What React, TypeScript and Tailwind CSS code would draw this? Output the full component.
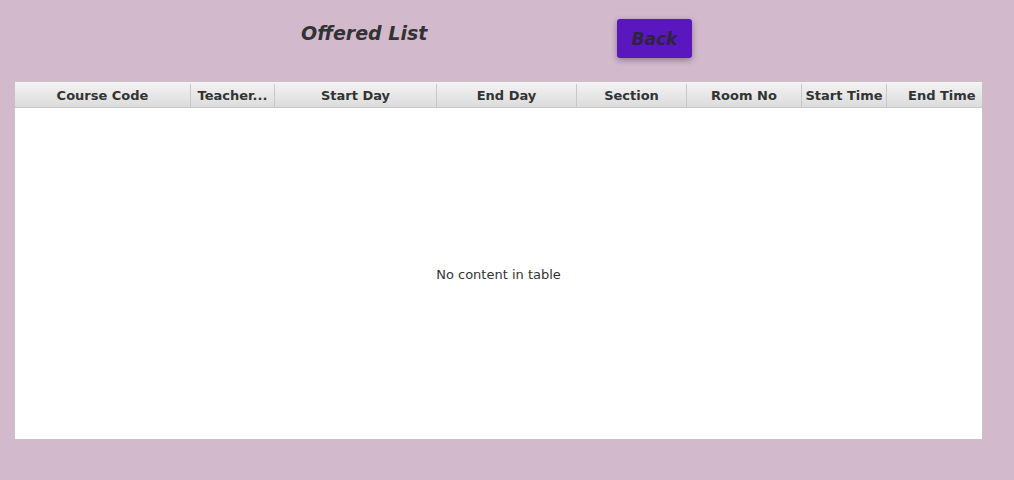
import React from 'react';

const columns = [
  { label: 'Course Code', w: 'w-[176px]' },
  { label: 'Teacher...', w: 'w-[84px]' },
  { label: 'Start Day', w: 'w-[162px]' },
  { label: 'End Day', w: 'w-[140px]' },
  { label: 'Section', w: 'w-[110px]' },
  { label: 'Room No', w: 'w-[115px]' },
  { label: 'Start Time', w: 'w-[85px]' },
];

const App: React.FC = () => {
  return (
    <div className="w-[1014px] h-[480px] bg-[#d2b9cc] font-['DejaVu_Sans',sans-serif] text-[#333333]">
      <div className="flex items-start h-[81px] pl-[301px]">
        <div className="w-[316px] mt-[21px]">
          <h1 className="text-[19px] font-bold italic leading-[24px]">Offered List</h1>
        </div>
        <button className="mt-[19px] w-[75px] h-[39px] pt-[2px] rounded-[3px] bg-[#5a17bf] text-[17px] font-bold italic text-[#2e2440] shadow-[0_2px_6px_rgba(0,0,0,0.35)]">
          Back
        </button>
      </div>
      <div className="ml-[14px] w-[969px] h-[359px] bg-white border border-[#c6c3c6] flex flex-col">
        <div className="flex h-[26px] pt-[2px] bg-gradient-to-b from-[#f3f3f3] to-[#dcdcdc] border-b border-[#c8c8c8] text-[13px] font-bold">
          {columns.map((c) => (
            <div
              key={c.label}
              className={`${c.w} shrink-0 flex items-center justify-center border-r border-[#c8c8c8] whitespace-nowrap`}
            >
              {c.label}
            </div>
          ))}
          <div className="flex-1 flex items-center pl-[21px] whitespace-nowrap">End Time</div>
        </div>
        <div className="flex-1 flex items-center justify-center pt-[3px] text-[13px]">No content in table</div>
      </div>
    </div>
  );
};

export default App;
